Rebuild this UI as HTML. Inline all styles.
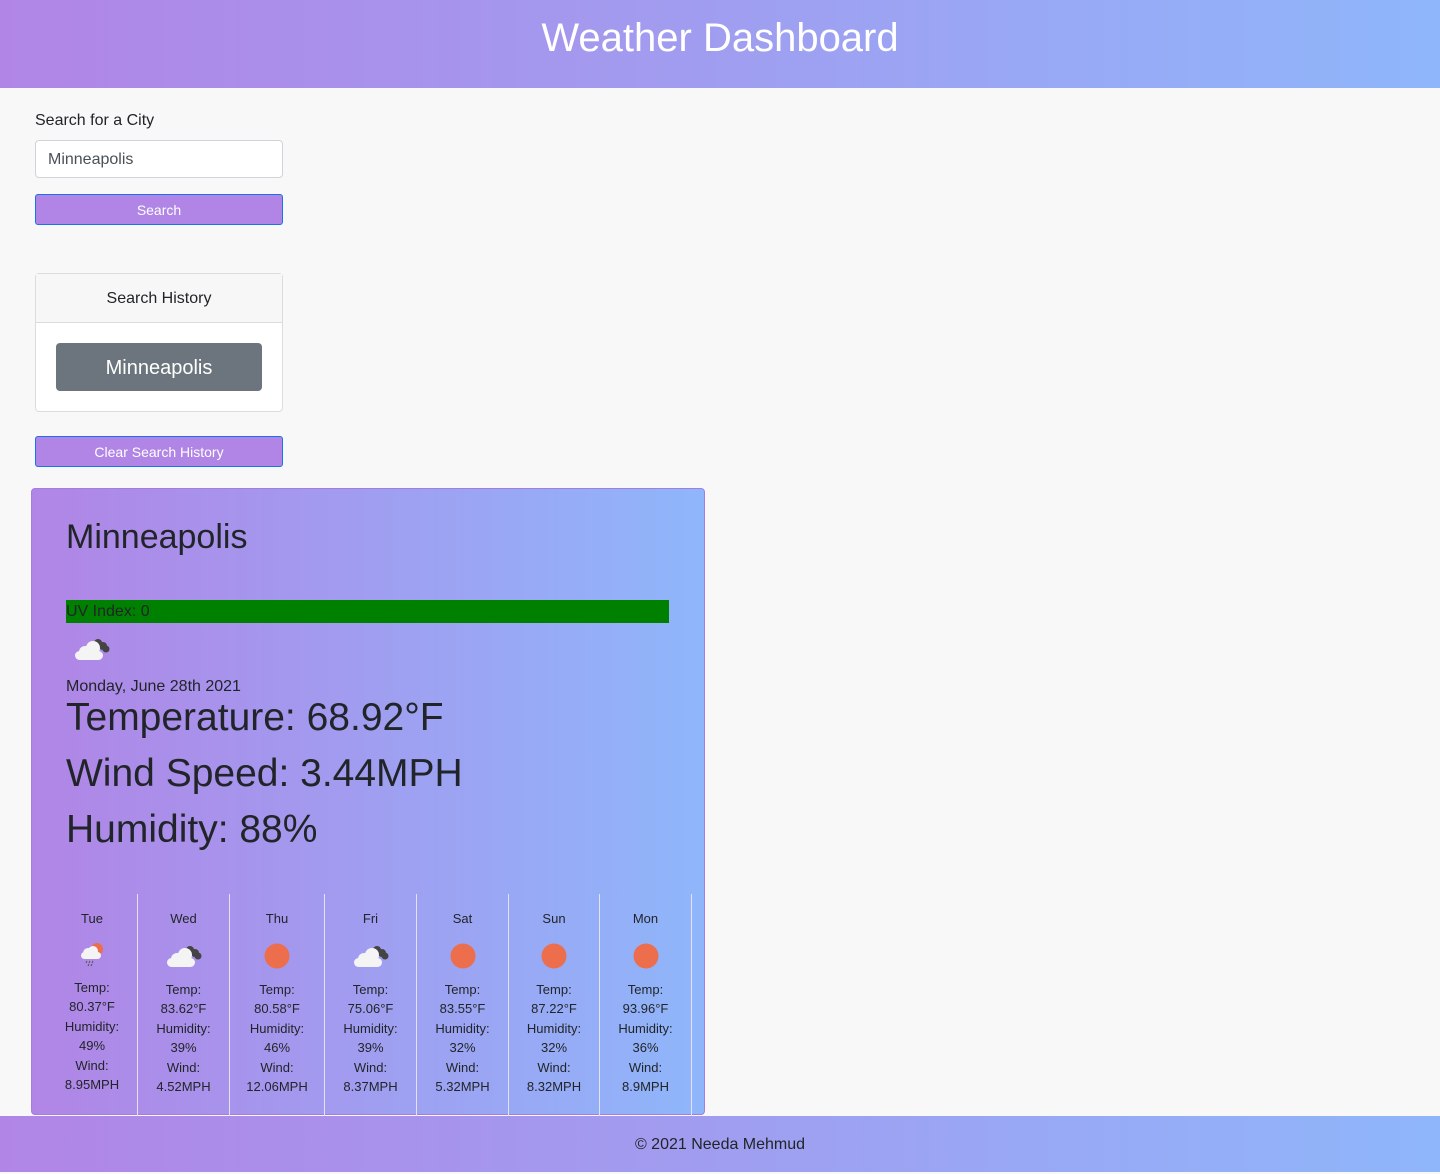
<!DOCTYPE html>
<html><head><meta charset="utf-8"><style>
*{box-sizing:border-box;margin:0;padding:0}
body{width:1440px;height:1172px;background:#f8f8f8;font-family:"Liberation Sans",Helvetica,sans-serif;color:#212529;position:relative;overflow:hidden}
.grad{background:linear-gradient(90deg,#b185e6,#8fb6fa)}
header{position:absolute;left:0;top:0;width:1440px;height:88px;color:#fff;font-size:40px;text-align:center;line-height:76px}
.lbl{position:absolute;left:35px;top:112px;font-size:16px}
.inp{position:absolute;left:35px;top:140px;width:248px;height:38px;background:#fff;border:1px solid #ced4da;border-radius:4px;padding-left:12px;line-height:38px;font-size:16px;color:#495057}
.btn{position:absolute;left:35px;width:248px;height:31px;background:#b185e6;border:1px solid #1a73e8;border-radius:3px;color:#fff;font-size:14px;text-align:center;line-height:30px}
.hist{position:absolute;left:35px;top:273px;width:248px;height:139px;border:1px solid #dcdcdc;border-radius:4px;background:#fff}
.hist .h{height:49px;background:#f7f7f7;border-bottom:1px solid #dcdcdc;text-align:center;line-height:50px;font-size:16px}
.hist .b{position:absolute;left:20px;top:69px;width:206px;height:48px;background:#6c757d;border-radius:4px;color:#fff;font-size:20px;text-align:center;line-height:50px}
.card{position:absolute;left:31px;top:488px;width:674px;height:627px;border:1px solid #a57ce0;border-radius:4px}
.city{position:absolute;left:34px;top:29px;font-size:34px}
.uv{position:absolute;left:34px;top:111px;width:603px;height:23px;background:#008000;font-size:16px;line-height:24px}
.date{position:absolute;left:34px;top:189px;font-size:16px}
.big{position:absolute;left:34px;font-size:39px}
.cols{position:absolute;left:15px;top:405px;display:flex;height:222px}
.col{border-right:1px solid #e6e0f5;text-align:center;font-size:13px;line-height:19.5px;padding-top:15px}
.col svg{display:block;margin:11px auto 10px}
footer{position:absolute;left:0;top:1116px;width:1440px;height:56px;text-align:center;line-height:58px;font-size:16px}
</style></head><body>
<header class="grad">Weather Dashboard</header>
<div class="lbl">Search for a City</div>
<div class="inp">Minneapolis</div>
<div class="btn" style="top:194px">Search</div>
<div class="hist"><div class="h">Search History</div><div class="b">Minneapolis</div></div>
<div class="btn" style="top:436px">Clear Search History</div>
<div class="card grad">
<div class="city">Minneapolis</div>
<div class="uv">UV Index: 0</div>
<svg style="position:absolute;left:41px;top:146px" width="38" height="26" viewBox="0 0 38 26"><circle cx="25" cy="8" r="4" fill="#444"/><circle cx="30" cy="11" r="4" fill="#444"/><circle cx="33" cy="14" r="3.5" fill="#444"/><circle cx="12" cy="17" r="6" fill="#f4f4f4"/><circle cx="20" cy="13" r="7" fill="#f4f4f4"/><rect x="2" y="16" width="28" height="9" rx="4.5" fill="#f4f4f4"/></svg>
<div class="date">Monday, June 28th 2021</div>
<div class="big" style="top:207px">Temperature: 68.92°F</div>
<div class="big" style="top:263px">Wind Speed: 3.44MPH</div>
<div class="big" style="top:319px">Humidity: 88%</div>
<div class="cols">
<div class="col" style="width:91px">Tue<svg width="28" height="28" viewBox="0 0 28 28"><circle cx="19" cy="9" r="6" fill="#ec6e4c"/><circle cx="10" cy="13" r="5" fill="#f4f4f4"/><circle cx="15" cy="11" r="5" fill="#f4f4f4"/><rect x="3" y="12" width="20" height="7" rx="3.5" fill="#f4f4f4"/><path d="M9 21l-1 2M12 21l-1 2M15 21l-1 2M11 24l-1 2M14 24l-1 2" stroke="#555" stroke-width="1"/></svg>Temp:<br>80.37°F<br>Humidity:<br>49%<br>Wind:<br>8.95MPH</div>
<div class="col" style="width:92px">Wed<svg width="38" height="30" viewBox="0 0 38 26"><circle cx="25" cy="8" r="4" fill="#444"/><circle cx="30" cy="11" r="4" fill="#444"/><circle cx="33" cy="14" r="3.5" fill="#444"/><circle cx="12" cy="17" r="6" fill="#f4f4f4"/><circle cx="20" cy="13" r="7" fill="#f4f4f4"/><rect x="2" y="16" width="28" height="9" rx="4.5" fill="#f4f4f4"/></svg>Temp:<br>83.62°F<br>Humidity:<br>39%<br>Wind:<br>4.52MPH</div>
<div class="col" style="width:95px">Thu<svg width="30" height="30"><circle cx="15" cy="16" r="12.5" fill="#ec6e4c"/></svg>Temp:<br>80.58°F<br>Humidity:<br>46%<br>Wind:<br>12.06MPH</div>
<div class="col" style="width:92px">Fri<svg width="38" height="30" viewBox="0 0 38 26"><circle cx="25" cy="8" r="4" fill="#444"/><circle cx="30" cy="11" r="4" fill="#444"/><circle cx="33" cy="14" r="3.5" fill="#444"/><circle cx="12" cy="17" r="6" fill="#f4f4f4"/><circle cx="20" cy="13" r="7" fill="#f4f4f4"/><rect x="2" y="16" width="28" height="9" rx="4.5" fill="#f4f4f4"/></svg>Temp:<br>75.06°F<br>Humidity:<br>39%<br>Wind:<br>8.37MPH</div>
<div class="col" style="width:92px">Sat<svg width="30" height="30"><circle cx="15" cy="16" r="12.5" fill="#ec6e4c"/></svg>Temp:<br>83.55°F<br>Humidity:<br>32%<br>Wind:<br>5.32MPH</div>
<div class="col" style="width:91px">Sun<svg width="30" height="30"><circle cx="15" cy="16" r="12.5" fill="#ec6e4c"/></svg>Temp:<br>87.22°F<br>Humidity:<br>32%<br>Wind:<br>8.32MPH</div>
<div class="col" style="width:92px">Mon<svg width="30" height="30"><circle cx="15" cy="16" r="12.5" fill="#ec6e4c"/></svg>Temp:<br>93.96°F<br>Humidity:<br>36%<br>Wind:<br>8.9MPH</div>
</div>
</div>
<footer class="grad">© 2021 Needa Mehmud</footer>
</body></html>
